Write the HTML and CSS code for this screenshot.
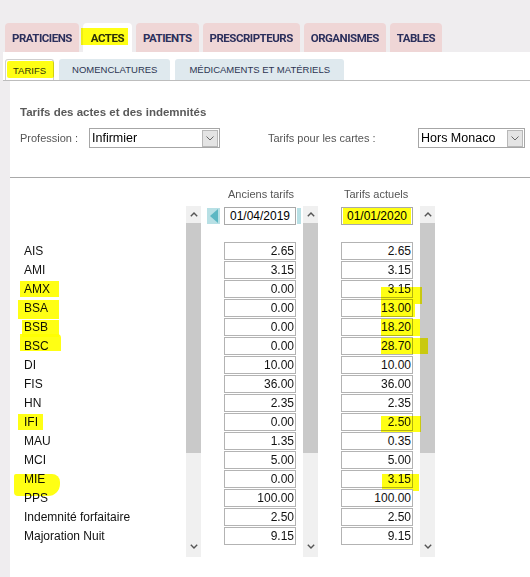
FILE: index.html
```html
<!DOCTYPE html>
<html lang="fr">
<head>
<meta charset="utf-8">
<title>Tarifs</title>
<link rel="stylesheet" href="styles.css">
</head>
<body>
<div class="topbar">
  <div class="tab">PRATICIENS</div>
  <div class="tab active"><span class="hl hl-actes"></span>ACTES</div>
  <div class="tab">PATIENTS</div>
  <div class="tab">PRESCRIPTEURS</div>
  <div class="tab">ORGANISMES</div>
  <div class="tab">TABLES</div>
</div>
<div class="subbar">
  <div class="stab active"><span class="hl hl-tarifs"></span>TARIFS</div>
  <div class="stab">NOMENCLATURES</div>
  <div class="stab stab-med">MÉDICAMENTS ET MATÉRIELS</div>
</div>
<div class="content">
  <div class="title">Tarifs des actes et des indemnités</div>
  <div class="filters">
    <span class="lbl lbl-prof">Profession :</span>
    <div class="select sel-prof"><span class="sel-text">Infirmier</span><span class="drop"><svg width="8" height="5" viewBox="0 0 8 5"><polyline points="0.5,0.5 4,4 7.5,0.5" fill="none" stroke="#666" stroke-width="1"/></svg></span></div>
    <span class="lbl lbl-cartes">Tarifs pour les cartes :</span>
    <div class="select sel-carte"><span class="sel-text">Hors Monaco</span><span class="drop"><svg width="8" height="5" viewBox="0 0 8 5"><polyline points="0.5,0.5 4,4 7.5,0.5" fill="none" stroke="#666" stroke-width="1"/></svg></span></div>
  </div>
  <div class="sep"></div>
  <div class="heads"><span class="head head-old">Anciens tarifs</span><span class="head">Tarifs actuels</span></div>
  <div class="grid">
    <div class="col-labels">
      <div class="lrow">AIS</div>
      <div class="lrow">AMI</div>
      <div class="lrow"><span class="hl hl-amx"></span>AMX</div>
      <div class="lrow"><span class="hl hl-bsa"></span>BSA</div>
      <div class="lrow"><span class="hl hl-bsb"></span>BSB</div>
      <div class="lrow"><span class="hl hl-bsc"></span>BSC</div>
      <div class="lrow">DI</div>
      <div class="lrow">FIS</div>
      <div class="lrow">HN</div>
      <div class="lrow"><span class="hl hl-ifi"></span>IFI</div>
      <div class="lrow">MAU</div>
      <div class="lrow">MCI</div>
      <div class="lrow"><span class="hl hl-mie"></span>MIE</div>
      <div class="lrow">PPS</div>
      <div class="lrow">Indemnité forfaitaire</div>
      <div class="lrow">Majoration Nuit</div>
    </div>
    <div class="sb">
      <div class="sb-up"><svg width="8" height="5" viewBox="0 0 8 5"><polyline points="0.8,4.2 4,1 7.2,4.2" fill="none" stroke="#555" stroke-width="1.4"/></svg></div>
      <div class="sb-thumb"></div>
      <div class="sb-rest"></div>
      <div class="sb-down"><svg width="8" height="5" viewBox="0 0 8 5"><polyline points="0.8,0.8 4,4 7.2,0.8" fill="none" stroke="#555" stroke-width="1.4"/></svg></div>
    </div>
    <div class="col col-old">
      <div class="daterow">
        <span class="navbtn"><svg width="9" height="14" viewBox="0 0 9 14"><polygon points="1,7 9,0 9,14" fill="#5cb7c3"/></svg></span>
        <div class="date">01/04/2019</div>
        <span class="navbtn-clip"></span>
      </div>
      <div class="vals">
        <div class="val">2.65</div>
        <div class="val">3.15</div>
        <div class="val">0.00</div>
        <div class="val">0.00</div>
        <div class="val">0.00</div>
        <div class="val">0.00</div>
        <div class="val">10.00</div>
        <div class="val">36.00</div>
        <div class="val">2.35</div>
        <div class="val">0.00</div>
        <div class="val">1.35</div>
        <div class="val">5.00</div>
        <div class="val">0.00</div>
        <div class="val">100.00</div>
        <div class="val">2.50</div>
        <div class="val">9.15</div>
      </div>
    </div>
    <div class="sb">
      <div class="sb-up"><svg width="8" height="5" viewBox="0 0 8 5"><polyline points="0.8,4.2 4,1 7.2,4.2" fill="none" stroke="#555" stroke-width="1.4"/></svg></div>
      <div class="sb-thumb"></div>
      <div class="sb-rest"></div>
      <div class="sb-down"><svg width="8" height="5" viewBox="0 0 8 5"><polyline points="0.8,0.8 4,4 7.2,0.8" fill="none" stroke="#555" stroke-width="1.4"/></svg></div>
    </div>
    <div class="col col-new">
      <div class="daterow">
        <div class="date"><span class="hl hl-date"></span>01/01/2020</div>
      </div>
      <div class="vals">
        <div class="val">2.65</div>
        <div class="val">3.15</div>
        <div class="val"><span class="hl hl-v1"></span>3.15</div>
        <div class="val"><span class="hl hl-v2"></span>13.00</div>
        <div class="val"><span class="hl hl-v3"></span>18.20</div>
        <div class="val"><span class="hl hl-v4"></span>28.70</div>
        <div class="val">10.00</div>
        <div class="val">36.00</div>
        <div class="val">2.35</div>
        <div class="val"><span class="hl hl-v5"></span>2.50</div>
        <div class="val">0.35</div>
        <div class="val">5.00</div>
        <div class="val"><span class="hl hl-v6"></span>3.15</div>
        <div class="val">100.00</div>
        <div class="val">2.50</div>
        <div class="val">9.15</div>
      </div>
    </div>
    <div class="sb">
      <div class="sb-up"><svg width="8" height="5" viewBox="0 0 8 5"><polyline points="0.8,4.2 4,1 7.2,4.2" fill="none" stroke="#555" stroke-width="1.4"/></svg></div>
      <div class="sb-thumb"></div>
      <div class="sb-rest"></div>
      <div class="sb-down"><svg width="8" height="5" viewBox="0 0 8 5"><polyline points="0.8,0.8 4,4 7.2,0.8" fill="none" stroke="#555" stroke-width="1.4"/></svg></div>
    </div>
    <div class="col-right">
      <div class="rl rl-m">M</div>
      <div class="rl rl-h1">H</div>
      <div class="rl rl-h2">H</div>
      <div class="rl rl-p">P</div>
      <div class="rl rl-a">A</div>
    </div>
  </div>
</div>
</body>
</html>
```

FILE: styles.css
```css
* { box-sizing: border-box; }
html, body { margin: 0; padding: 0; }
body {
  width: 530px;
  height: 577px;
  overflow: hidden;
  background: #efedef;
  font-family: "Liberation Sans", Arial, sans-serif;
  color: #111;
}

/* top tabs */
.topbar {
  height: 52px;
  display: flex;
  align-items: flex-end;
  gap: 4px;
  padding-left: 5px;
}
.tab {
  position: relative;
  flex-shrink: 0;
  height: 29px;
  padding: 0 7px;
  display: flex;
  align-items: center;
  background: #efd6d6;
  border-radius: 4px 4px 0 0;
  font-family: Roboto, "Liberation Sans", sans-serif;
  font-weight: 700;
  font-size: 11.5px;
  letter-spacing: -0.5px;
  color: #2b2f5c;
}
.tab.active { background: #fff; padding: 0 8px; }

/* sub tabs */
.subbar {
  margin-left: 3px;
  height: 29px;
  background: #fff;
  display: flex;
  align-items: flex-end;
  gap: 5px;
  padding-left: 2px;
  border-bottom: 1px solid #bdbdbd;
}
.stab {
  position: relative;
  flex-shrink: 0;
  height: 21px;
  padding: 0 13px;
  display: flex;
  align-items: center;
  background: #dfe9ee;
  border-radius: 3px 3px 0 0;
  font-size: 9.5px;
  color: #2d3553;
}
.stab.active {
  background: #fff;
  border: 1px solid #cfcfcf;
  border-bottom: none;
  padding: 0 7px;
}
.stab-med { padding: 0 14px; }

/* highlighter marks */
.hl {
  position: absolute;
  background: #ffff14;
  mix-blend-mode: multiply;
  pointer-events: none;
}
.hl-actes { left: -2px; top: 5px; width: 47px; height: 17px; }
.hl-tarifs { left: 1px; top: 1px; width: 47px; height: 17px; border-radius: 2px; }

/* content */
.content {
  margin-left: 10px;
  background: #fff;
  height: 497px;
  padding: 24px 10px 0 10px;
}
.title {
  font-size: 11.5px;
  font-weight: 700;
  color: #595959;
  line-height: 14px;
}
.filters {
  margin-top: 9px;
  display: flex;
  align-items: center;
  height: 20px;
}
.lbl {
  flex-shrink: 0;
  font-size: 11px;
  color: #555;
}
.lbl-prof { width: 69px; }
.lbl-cartes { width: 150px; margin-left: 48px; }
.select {
  flex-shrink: 0;
  height: 20px;
  border: 1px solid #a6a6a6;
  background: #fff;
  display: flex;
  align-items: center;
  justify-content: space-between;
  padding: 0 1px 0 2px;
}
.sel-prof { width: 131px; }
.sel-carte { width: 107px; }
.sel-text { font-size: 12.5px; color: #000; }
.drop {
  width: 16px;
  height: 17px;
  background: #e4e4e4;
  border: 1px solid #b8b8b8;
  display: flex;
  align-items: center;
  justify-content: center;
}
.sep {
  margin: 29px -10px 0 -10px;
  height: 1px;
  background: #a9a9a9;
}
.heads {
  margin-top: 10px;
  height: 13px;
  line-height: 13px;
  font-size: 11px;
  color: #555;
  padding-left: 208px;
}
.head { display: inline-block; }
.head-old { width: 116px; }

/* grid */
.grid {
  margin-top: 5px;
  display: flex;
  height: 351px;
}
.col-labels {
  flex-shrink: 0;
  width: 166px;
  padding-top: 36px;
}
.lrow {
  position: relative;
  height: 19px;
  line-height: 19px;
  padding-left: 4px;
  font-size: 12px;
  color: #111;
}
.hl-amx { left: 0; top: 1px; width: 39px; height: 16px; }
.hl-bsa { left: -2px; top: 1px; width: 41px; height: 19px; }
.hl-bsb { left: 2px; top: 2px; width: 37px; height: 17px; }
.hl-bsc { left: 0; top: -3px; width: 41px; height: 17px; border-radius: 0 4px 0 0; }
.hl-ifi { left: -2px; top: 1px; width: 25px; height: 16px; }
.hl-mie { left: -6px; top: 4px; width: 46px; height: 22px; border-radius: 2px 8px 12px 4px; }

.sb {
  flex-shrink: 0;
  width: 15px;
  height: 351px;
  background: #f0f0f0;
  display: flex;
  flex-direction: column;
}
.sb-up {
  height: 17px;
  display: flex;
  align-items: center;
  justify-content: center;
}
.sb-thumb {
  height: 230px;
  background: #c9c9c9;
}
.sb-rest { flex: 1; }
.sb-down {
  height: 17px;
  display: flex;
  align-items: flex-start;
  justify-content: center;
  padding-top: 4px;
}

.col {
  flex-shrink: 0;
  width: 102px;
  padding-top: 1px;
}
.col-old { padding-left: 6px; }
.col-old .vals { margin-left: 17px; }
.col-new { padding-left: 23px; }
.daterow {
  display: flex;
  align-items: flex-start;
  height: 18px;
  margin-bottom: 17px;
}
.navbtn {
  width: 13px;
  height: 16px;
  margin-top: 1px;
  margin-right: 4px;
  background: #b8e0e5;
  display: flex;
  align-items: center;
  justify-content: center;
}
.navbtn-clip {
  width: 4px;
  height: 16px;
  margin-top: 1px;
  margin-left: 1px;
  background: #b8e0e5;
}
.date {
  position: relative;
  width: 72px;
  height: 18px;
  border: 1px solid #a9a9a9;
  background: #fff;
  font-size: 12px;
  line-height: 16px;
  text-align: center;
  color: #000;
}
.hl-date { left: 1px; top: 0; width: 68px; height: 16px; }
.val {
  position: relative;
  width: 72px;
  height: 18px;
  margin-bottom: 1px;
  border: 1px solid #b3b3b3;
  background: #fff;
  font-size: 12px;
  line-height: 16px;
  text-align: right;
  padding-right: 1px;
  color: #111;
}
.hl-v1 { left: 39px; top: 6px; width: 41px; height: 17px; }
.hl-v2 { left: 39px; top: -1px; width: 34px; height: 18px; }
.hl-v3 { left: 39px; top: 0; width: 39px; height: 17px; }
.hl-v4 { left: 39px; top: 0; width: 47px; height: 16px; }
.hl-v5 { left: 39px; top: 2px; width: 40px; height: 16px; }
.hl-v6 { left: 40px; top: 3px; width: 37px; height: 17px; }

.col-right {
  flex: 1;
  padding-left: 87px;
  overflow: hidden;
  font-size: 11px;
  color: #555;
}
.rl { line-height: 14px; height: 14px; }
.rl-m { margin-top: 22px; }
.rl-h1 { margin-top: 12px; }
.rl-h2 { margin-top: 10px; }
.rl-p { margin-top: 40px; }
.rl-a { margin-top: 47px; color: #e00000; font-weight: 700; font-size: 12px; }
```
